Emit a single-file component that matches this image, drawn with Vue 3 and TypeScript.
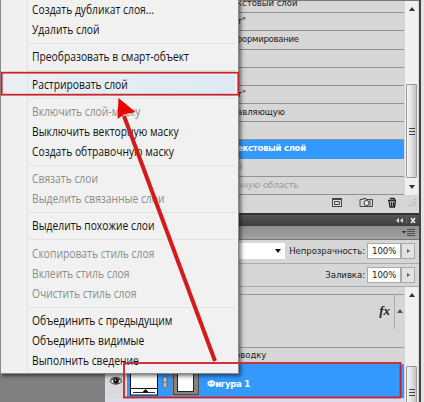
<script setup lang="ts">
interface MenuItem {
  label: string
  disabled?: boolean
  active?: boolean
}

const groups: MenuItem[][] = [
  [{ label: 'Создать дубликат слоя...' }, { label: 'Удалить слой' }],
  [{ label: 'Преобразовать в смарт-объект' }],
  [{ label: 'Растрировать слой', active: true }],
  [
    { label: 'Включить слой-маску', disabled: true },
    { label: 'Выключить векторную маску' },
    { label: 'Создать обтравочную маску' },
  ],
  [
    { label: 'Связать слои', disabled: true },
    { label: 'Выделить связанные слои', disabled: true },
  ],
  [{ label: 'Выделить похожие слои' }],
  [
    { label: 'Скопировать стиль слоя', disabled: true },
    { label: 'Вклеить стиль слоя', disabled: true },
    { label: 'Очистить стиль слоя', disabled: true },
  ],
  [{ label: 'Объединить с предыдущим' }, { label: 'Объединить видимые' }, { label: 'Выполнить сведение' }],
]

interface HistoryRow {
  text: string
  kind?: 'selected' | 'undone' | 'tight'
}

const history: HistoryRow[] = [
  { text: 'кстовый слой' },
  { text: 'т"' },
  { text: 'формирование', kind: 'tight' },
  { text: '' },
  { text: '' },
  { text: 'т"' },
  { text: 'авляющую' },
  { text: '' },
  { text: 'екстовый слой', kind: 'selected' },
  { text: 'й', kind: 'undone' },
  { text: 'нную область', kind: 'undone' },
]

const fields = [
  { label: 'Непрозрачность:', value: '100%', mode: true },
  { label: 'Заливка:', value: '100%', mode: false },
]
</script>

<template>
  <div class="screen">
    <div class="desk"></div>
    <div class="panels">
      <section class="history">
        <div class="history-body">
          <div class="rows">
            <div v-for="(row, i) in history" :key="i" class="row" :class="row.kind"><span>{{ row.text }}</span></div>
          </div>
          <div class="scroll">
            <i class="arrow up"></i>
            <div class="thumb history-thumb"><i></i><i></i><i></i></div>
            <i class="arrow down"></i>
          </div>
        </div>
        <div class="footer">
          <svg width="90" height="16" viewBox="0 0 90 16">
            <rect x="4.500" y="3.500" width="9" height="8" fill="#ddd" stroke="#444" />
            <path d="M4 4.500H14M6.500 6.500H11.500V9.500H6.500Z" fill="none" stroke="#444" />
            <path d="M32 4.500H35V3.500H38V4.500H44.500V11.500H32Z" fill="#d8d8d8" stroke="#444" />
            <circle cx="38.500" cy="8" r="2.500" fill="#eee" stroke="#333" />
            <path d="M42 4V12" stroke="#555" />
            <path d="M60 5.500H68M62 3.500H66L67 5M61 6L62 12H66.500L67.500 6M63.500 7V11M65.500 7V11" fill="none" stroke="#222" stroke-width="1.300" />
            <path d="M87 4V12M84 7V12M81 10V12" stroke="#999" stroke-dasharray="1 1.500" />
          </svg>
        </div>
      </section>
      <div class="titlebar">
        <svg width="24" height="11" viewBox="0 0 24 11">
          <path d="M4 3L1 5.500L4 8ZM8 3L5 5.500L8 8Z" fill="#ddd" />
          <path d="M11.500 2V9" stroke="#666" />
          <path d="M16 3L20 8M20 3L16 8" stroke="#eee" stroke-width="1.500" />
        </svg>
      </div>
      <div class="tabs">
        <svg width="14" height="12" viewBox="0 0 14 12">
          <path d="M0 5H4L2 7.500Z" fill="#222" />
          <path d="M5 3.500H13M5 5.500H13M5 7.500H13M5 9.500H13" stroke="#444" stroke-width=".9" />
        </svg>
      </div>
      <div v-for="f in fields" :key="f.label" class="field">
        <div v-if="f.mode" class="mode"><i></i></div>
        <label>{{ f.label }}</label>
        <div class="value">{{ f.value }}</div>
        <div class="step"><i></i></div>
      </div>
      <section class="layers">
        <div class="layer-list">
          <div class="fx-row">
            <div class="fx-left"><b>fx</b></div>
            <div class="fx-right"><i></i></div>
          </div>
          <div class="stroke-row"><span>бводку</span></div>
          <div class="layer">
            <div class="eye">
              <svg width="14" height="10" viewBox="0 0 14 10">
                <path d="M1 5.500C4 1.500 9 1.500 13 5.500C9 9 4 9 1 5.500Z" fill="#eee" stroke="#222" />
                <circle cx="7" cy="5" r="2.800" fill="#111" />
                <path d="M1.500 3.500C5 .5 9 .5 12.500 3.500" fill="none" stroke="#333" />
                <circle cx="6.500" cy="4.300" r=".7" fill="#fff" />
              </svg>
            </div>
            <div class="layer-body">
              <svg width="74" height="34" viewBox="0 0 74 34">
                <rect x="3.500" y=".5" width="27" height="30.500" fill="#fff" stroke="#111" />
                <path d="M3 24.500H31" stroke="#111" />
                <path d="M6 28.500H28M16 28L18.500 25.500L21 28Z" stroke="#111" fill="#111" stroke-width=".9" />
                <rect x="36" y="13" width="4" height="6" rx="1.800" fill="#ccc" stroke="#666" />
                <rect x="36" y="18" width="4" height="6" rx="1.800" fill="#bbb" stroke="#666" />
                <rect x="45" y="0" width="28" height="32" fill="#fff" />
                <rect x="46" y="0" width="26" height="31" fill="#858585" stroke="#111" />
                <rect x="50.500" y="5.500" width="16" height="22" fill="#fff" stroke="#222" />
              </svg>
              <strong>Фигура 1</strong>
            </div>
          </div>
          <div class="next-layer"></div>
        </div>
        <div class="scroll">
          <i class="arrow up"></i>
          <div class="thumb layers-thumb"><i></i><i></i><i></i></div>
        </div>
      </section>
    </div>
    <div class="edge"></div>

    <nav class="menu">
      <div v-for="(g, gi) in groups" :key="gi" class="group">
        <div v-for="item in g" :key="item.label" class="item" :class="{ disabled: item.disabled, active: item.active }">
          <span>{{ item.label }}</span>
        </div>
      </div>
    </nav>

    <svg class="marks" width="424" height="402" viewBox="0 0 424 402">
      <rect x="1.700" y="72.700" width="236.600" height="22" fill="none" stroke="#c9252b" stroke-width="1.800" />
      <rect x="124" y="363" width="276.500" height="34.500" fill="none" stroke="#c9202b" stroke-width="1.800" />
      <path d="M215 361L124 116" stroke="#d41a1a" stroke-width="4" />
      <path d="M118.500 98L117.500 119L124 114.500L135.500 112Z" fill="#f00000" />
    </svg>
  </div>
</template>

<style>
body {
  overflow: hidden;
}
</style>

<style scoped>
* {
  box-sizing: border-box;
}
.screen {
  position: relative;
  display: flex;
  width: 424px;
  height: 402px;
  overflow: hidden;
  font: 9.5px/12px "DejaVu Sans Condensed", "DejaVu Sans", sans-serif;
  font-stretch: semi-condensed;
  letter-spacing: -0.05px;
  color: #222;
}
.desk {
  width: 105px;
  background: #808080;
}
.panels {
  width: 314px;
  background: #d6d6d6;
  display: flex;
  flex-direction: column;
}
.edge {
  width: 5px;
  border-left: 2px solid #444;
  background: #e4e4e4;
}
.history {
  height: 213px;
  border-top: 1px solid #777;
  flex: none;
}
.history-body {
  display: flex;
  height: 194px;
}
.rows {
  width: 299px;
  overflow: hidden;
  display: flex;
  flex-direction: column;
  justify-content: flex-end;
}
.row {
  flex: none;
  height: 18.2px;
  border-bottom: 1px solid #929292;
  padding: 2px 0 0 132px;
  white-space: nowrap;
}
.selected {
  background: #3399fe;
  border-color: #3399fe;
  color: #fff;
  font-weight: bold;
  letter-spacing: -0.3px;
}
.undone {
  color: #999;
  font-style: italic;
}
.tight {
  padding-left: 130px;
  letter-spacing: -0.3px;
}
.scroll {
  width: 13px;
  margin-left: 1px;
  background: #f0f0f0;
  display: flex;
  flex-direction: column;
  align-items: center;
}
.arrow {
  width: 0;
  height: 0;
  flex: none;
  border: 3px solid transparent;
}
.up {
  border-top: 0;
  border-bottom: 4px solid #333;
  margin-top: 6px;
}
.down {
  border-bottom: 0;
  border-top: 4px solid #333;
  margin-top: 7px;
}
.thumb {
  width: 11px;
  border: 1px solid #999;
  border-radius: 1px;
  background: linear-gradient(90deg, #f6f6f6, #e0e0e0 50%, #c4c4c8);
  display: flex;
  flex-direction: column;
  align-items: center;
  justify-content: center;
  gap: 2px;
}
.thumb i {
  width: 6px;
  height: 1px;
  background: #444;
}
.history-thumb {
  height: 94px;
  margin-top: 73px;
}
.layers-thumb {
  height: 53px;
  margin-top: 69px;
}
.footer {
  display: flex;
  justify-content: flex-end;
  padding: 0 1px 0 0;
}
.titlebar {
  height: 13px;
  flex: none;
  border-top: 2px solid #333;
  background: linear-gradient(#555, #3e3e3e);
  display: flex;
  justify-content: flex-end;
}
.tabs {
  height: 14px;
  flex: none;
  background: linear-gradient(#8d8d8d, #a2a2a2);
  border-bottom: 1px solid #777;
  display: flex;
  justify-content: flex-end;
  padding-right: 3px;
}
.field {
  height: 23.5px;
  flex: none;
  display: flex;
  align-items: center;
  justify-content: flex-end;
  padding-right: 4px;
  border-bottom: 1px solid #aaa;
}
.mode {
  width: 100px;
  height: 16px;
  background: #fff;
  display: flex;
  align-items: center;
  justify-content: flex-end;
  padding-right: 4px;
  margin-right: 4px;
}
.mode i {
  border: 3.5px solid transparent;
  border-top: 4px solid #111;
  border-bottom: 0;
}
.value {
  width: 34px;
  height: 16px;
  margin-left: 2px;
  border: 1px solid #aaa;
  background: #fff;
  padding: 1px 0 0 4px;
}
.step {
  width: 14px;
  height: 16px;
  border: 1px solid #aaa;
  background: #e2e2e5;
  display: flex;
  align-items: center;
  justify-content: center;
}
.step i {
  border: 2px solid transparent;
  border-left: 3px solid #556;
  border-right: 0;
}
.layers {
  display: flex;
  flex: 1;
}
.layer-list {
  width: 299px;
  padding-top: 7px;
}
.fx-row {
  height: 54px;
  border-top: 1px solid #999;
  border-bottom: 1px solid #999;
  display: flex;
}
.fx-left {
  width: 289px;
  text-align: right;
  padding: 9px 4px 0 0;
}
.fx-left b {
  font: italic bold 13px/14px "Liberation Serif", serif;
}
.fx-right {
  width: 10px;
  height: 34px;
  border-left: 1px solid #aaa;
  padding: 14px 0 0 2px;
}
.fx-right i {
  display: block;
  width: 0;
  border: 3px solid transparent;
  border-bottom: 4px solid #555;
  border-top: 0;
}
.stroke-row {
  height: 16px;
  padding: 1px 0 0 130px;
}
.layer {
  display: flex;
  height: 34px;
}
.eye {
  width: 22px;
  padding: 12px 0 0 4px;
  background: #d9d9de;
}
.layer-body {
  flex: 1;
  background: #3399fe;
  display: flex;
  align-items: center;
  color: #fff;
}
.layer-body strong {
  margin: 5px 0 0 6px;
  letter-spacing: -0.3px;
}
.next-layer {
  height: 5px;
  background: #dcdcec;
}
.menu {
  position: absolute;
  left: 0;
  top: 0;
  width: 239px;
  height: 374px;
  border: 1px solid #888;
  border-top: 0;
  background: linear-gradient(90deg, #f0f0f0 26px, #e2e2e2 26px, #e2e2e2 27px, #f1f1f1 27px);
  box-shadow: 2px 2px 4px rgba(0, 0, 0, 0.55);
  font: 12px/20px "Open Sans", sans-serif;
  letter-spacing: 0;
  color: #111;
}
.group + .group {
  padding-top: 7.3px;
  background: linear-gradient(#e2e2e2, #e2e2e2) 28px 3px / 206px 1px no-repeat;
}
.item {
  height: 20px;
  padding-left: 31px;
  white-space: nowrap;
}
.item span {
  display: inline-block;
  transform: scaleX(0.858);
  transform-origin: left;
}
.disabled {
  color: #8c8c8c;
}
.active {
  margin-right: 3px;
  background: linear-gradient(90deg, rgba(226, 238, 246, 0.5), #dceaf5);
}
.marks {
  position: absolute;
  left: 0;
  top: 0;
}
</style>
